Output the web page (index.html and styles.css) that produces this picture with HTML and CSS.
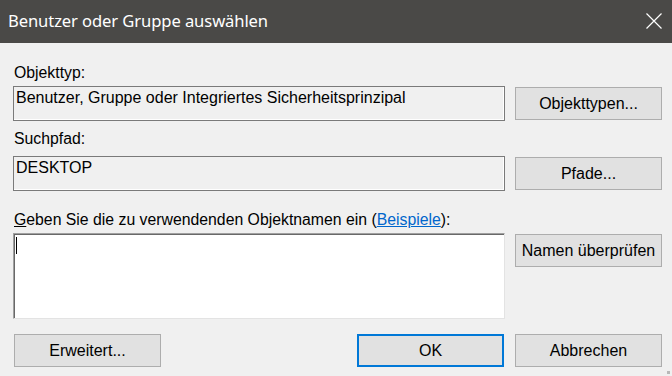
FILE: index.html
```html
<!DOCTYPE html>
<html lang="de">
<head>
<meta charset="utf-8">
<title>Benutzer oder Gruppe auswählen</title>
<link rel="stylesheet" href="styles.css">
</head>
<body>
<div class="dialog">
  <div class="titlebar">
    <span class="title">Benutzer oder Gruppe auswählen</span>
    <svg class="close" width="16" height="16" viewBox="0 0 16 16"><path d="M0.5 0.5 L15.5 15.5 M15.5 0.5 L0.5 15.5" stroke="#fff" stroke-width="1.2" fill="none"/></svg>
  </div>
  <div class="content">
    <div class="label l1">Objekttyp:</div>
    <div class="row">
      <div class="field">Benutzer, Gruppe oder Integriertes Sicherheitsprinzipal</div>
      <button class="btn">Objekttypen...</button>
    </div>
    <div class="label l2">Suchpfad:</div>
    <div class="row">
      <div class="field">DESKTOP</div>
      <button class="btn">Pfade...</button>
    </div>
    <div class="label l3"><u>G</u>eben Sie die zu verwendenden Objektnamen ein (<a class="link" href="#">Beispiele</a>):</div>
    <div class="row top">
      <div class="textarea"><span class="caret"></span></div>
      <button class="btn btn-check">Namen überprüfen</button>
    </div>
    <div class="actions">
      <button class="btn btn-adv">Erweitert...</button>
      <div class="right">
        <button class="btn btn-ok">OK</button>
        <button class="btn">Abbrechen</button>
      </div>
    </div>
  </div>
  <span class="grip"></span>
</div>
</body>
</html>
```
FILE: styles.css
```css
* { box-sizing: border-box; }
html, body { margin: 0; padding: 0; }
body {
  width: 672px;
  height: 376px;
  overflow: hidden;
  background: #f0f0f0;
  font-family: "Liberation Sans", Arial, sans-serif;
  font-size: 16px;
  color: #000;
}
.dialog { position: relative; width: 672px; height: 376px; }
.titlebar {
  height: 43px;
  background: #4a4947;
  color: #fff;
  display: flex;
  align-items: center;
  justify-content: space-between;
  padding: 0 10px 0 8px;
}
.title {
  font-family: "Noto Sans", "Open Sans", sans-serif;
  font-size: 16.6px;
  letter-spacing: -0.1px;
  margin-top: -2px;
}
.close { display: block; margin-top: -1px; }
.content { padding: 0 10px 0 13px; }
.label { height: 20px; line-height: 20px; padding-left: 1px; font-size: 15.8px; }
.l1 { margin-top: 20px; margin-bottom: 3px; }
.l2 { margin-top: 8px; margin-bottom: 7px; }
.l3 { margin-top: 19px; margin-bottom: 3px; }
.link { color: #0066cc; text-decoration: underline; }
.row { display: flex; align-items: center; gap: 10px; }
.row.top { align-items: flex-start; }
.field {
  width: 492px;
  height: 35px;
  border: 1px solid #7a7a7a;
  box-shadow: inset -1px -1px 0 #ffffff;
  padding: 1px 0 0 2px;
  line-height: 19px;
}
.btn {
  width: 147px;
  height: 33px;
  border: 1px solid #adadad;
  background: #e1e1e1;
  font-family: "Liberation Sans", Arial, sans-serif;
  font-size: 16px;
  color: #000;
  padding: 0;
}
.textarea {
  position: relative;
  width: 492px;
  height: 86px;
  background: #fff;
  border: 1px solid;
  border-color: #a0a0a0 #e3e3e3 #e3e3e3 #a0a0a0;
  box-shadow: inset 1px 1px 0 #696969;
  padding: 3px 0 0 2px;
}
.caret { display: block; width: 1px; height: 17px; background: #000; }
.btn-check { margin-top: 1px; }
.actions {
  display: flex;
  justify-content: space-between;
  margin-top: 15px;
}
.btn-adv { margin-left: 1px; }
.right { display: flex; gap: 11px; }
.btn-ok { border: 2px solid #0078d7; }
.grip {
  position: absolute;
  right: 2px;
  bottom: 2px;
  width: 3px;
  height: 3px;
  background: #b8b8b8;
}
```
